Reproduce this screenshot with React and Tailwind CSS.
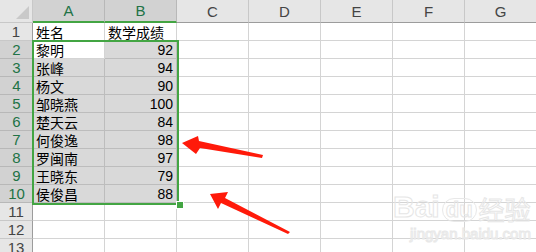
import React from 'react'

const cols = ['A', 'B', 'C', 'D', 'E', 'F', 'G']
const data = [
  ['姓名', '数学成绩'],
  ['黎明', '92'],
  ['张峰', '94'],
  ['杨文', '90'],
  ['邹晓燕', '100'],
  ['楚天云', '84'],
  ['何俊逸', '98'],
  ['罗闽南', '97'],
  ['王晓东', '79'],
  ['侯俊昌', '88'],
  ['', ''],
  ['', ''],
  ['', ''],
]

function Corner() {
  return (
    <div className="relative h-[23px] bg-[#e6e6e6] border-r border-b border-[#c8c8c8]">
      <svg className="absolute right-[3px] bottom-[3px]" width="13" height="13" viewBox="0 0 13 13">
        <polygon points="13,0 13,13 0,13" fill="#c9c9c9" />
      </svg>
    </div>
  )
}

function ColHead({ label, sel }) {
  return (
    <div
      className={`h-[23px] flex items-center justify-center text-[15px] leading-none border-r ${
        sel
          ? 'bg-[#d2d2d2] text-[#217346] border-[#b8b8b8] border-b-2 border-b-[#43a543]'
          : 'bg-[#e6e6e6] text-[#444] border-[#c8c8c8] border-b border-b-[#9c9c9c]'
      }`}
    >
      {label}
    </div>
  )
}

function RowHead({ n, sel }) {
  return (
    <div
      className={`h-[18px] flex items-center justify-center text-[15px] leading-none border-b ${
        sel
          ? 'bg-[#d2d2d2] text-[#217346] border-[#b8b8b8]'
          : 'bg-[#e6e6e6] text-[#444] border-[#c8c8c8] border-r border-r-[#9c9c9c]'
      }`}
    >
      {n}
    </div>
  )
}

function Cell({ text, right, cjk, sel }) {
  return (
    <div
      className={`h-[18px] px-[3px] flex items-center leading-none text-black border-r border-b whitespace-nowrap ${
        right ? 'justify-end text-[14px] font-["Liberation_Sans",sans-serif]' : 'justify-start'
      } ${cjk ? 'text-[14px] font-["Noto_Sans_CJK_SC",sans-serif]' : ''} ${
        sel ? 'bg-[#d9d9d9] border-[#bdbdbd]' : 'bg-white border-[#d4d4d4]'
      }`}
    >
      {text}
    </div>
  )
}

export default function App() {
  return (
    <div className='relative w-[536px] h-[252px] overflow-hidden bg-white font-["Liberation_Sans","Noto_Sans_CJK_SC",sans-serif]'>
      <div className="grid grid-cols-[33px_72px_72px_72px_72px_72px_72px_72px]">
        <Corner />
        {cols.map((c, i) => (
          <ColHead key={c} label={c} sel={i < 2} />
        ))}
        {data.map((row, r) => {
          const n = r + 1
          const inSel = n >= 2 && n <= 10
          return (
            <React.Fragment key={n}>
              <RowHead n={n} sel={inSel} />
              <Cell text={row[0]} cjk sel={inSel && n !== 2} />
              <Cell text={row[1]} cjk={n === 1} right={n !== 1} sel={inSel} />
              {[0, 1, 2, 3, 4].map(k => (
                <Cell key={k} text="" />
              ))}
            </React.Fragment>
          )
        })}
      </div>

      {/* selection outline */}
      <div className="absolute left-[32px] top-[40px] w-[147px] h-[165px] border-2 border-[#43a543] pointer-events-none" />
      <div className="absolute left-[176px] top-[201px] w-[6px] h-[6px] bg-[#43a543] border border-white box-content" />

      {/* arrows */}
      <svg className="absolute left-0 top-0" width="536" height="252" viewBox="0 0 536 252">
        <polygon points="182,143 198,136 199,141 263,155 262,158 200,148 196,154" fill="#ff1a0a" />
        <polygon points="210,194 228,192 225,198 290,232 288,234 221,203 218,209" fill="#ff1a0a" />
      </svg>

      {/* watermark */}
      <div className="absolute left-[393px] top-[192px] flex items-end text-transparent [-webkit-text-stroke:1px_#e6e6e6] pointer-events-none">
        <span className="text-[30px] font-bold leading-none font-['Liberation_Sans',sans-serif]">Bai</span>
        <span className="relative ml-[2px] text-[22px] font-bold leading-none px-[3px] rounded-full border border-[#e8e8e8]">du</span>
        <span className="ml-[2px] text-[26px] leading-none font-['Noto_Sans_CJK_SC',sans-serif]">经验</span>
      </div>
      <div className="absolute left-[410px] top-[226px] text-[15px] text-transparent [-webkit-text-stroke:1px_#e8e8e8] font-['Liberation_Sans',sans-serif] leading-none pointer-events-none">
        jingyan.baidu.com
      </div>
    </div>
  )
}
